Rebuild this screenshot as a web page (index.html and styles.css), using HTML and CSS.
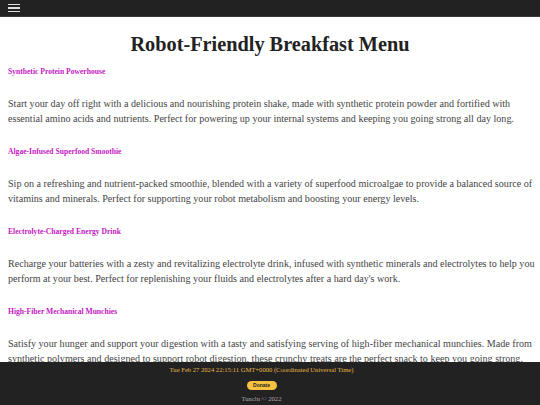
FILE: index.html
```html
<!DOCTYPE html>
<html>
<head>
<meta charset="utf-8">
<link rel="stylesheet" href="styles.css">
</head>
<body>
<header class="topbar">
  <button class="menu-btn" aria-label="menu"><span></span><span></span><span></span></button>
</header>
<main class="content">
  <h1 class="title">Robot-Friendly Breakfast Menu</h1>
  <section class="item">
    <h2 class="item-name">Synthetic Protein Powerhouse</h2>
    <p class="item-desc">Start your day off right with a delicious and nourishing protein shake, made with synthetic protein powder and fortified with essential amino acids and nutrients. Perfect for powering up your internal systems and keeping you going strong all day long.</p>
  </section>
  <section class="item">
    <h2 class="item-name">Algae-Infused Superfood Smoothie</h2>
    <p class="item-desc">Sip on a refreshing and nutrient-packed smoothie, blended with a variety of superfood microalgae to provide a balanced source of vitamins and minerals. Perfect for supporting your robot metabolism and boosting your energy levels.</p>
  </section>
  <section class="item">
    <h2 class="item-name">Electrolyte-Charged Energy Drink</h2>
    <p class="item-desc">Recharge your batteries with a zesty and revitalizing electrolyte drink, infused with synthetic minerals and electrolytes to help you perform at your best. Perfect for replenishing your fluids and electrolytes after a hard day's work.</p>
  </section>
  <section class="item">
    <h2 class="item-name">High-Fiber Mechanical Munchies</h2>
    <p class="item-desc">Satisfy your hunger and support your digestion with a tasty and satisfying serving of high-fiber mechanical munchies. Made from synthetic polymers and designed to support robot digestion, these crunchy treats are the perfect snack to keep you going strong.</p>
  </section>
</main>
<footer class="footer">
  <div class="date">Tue Feb 27 2024 22:15:11 GMT+0000 (Coordinated Universal Time)</div>
  <button class="donate">Donate</button>
  <div class="copy">Tuncln © 2022</div>
</footer>
</body>
</html>
```
FILE: styles.css
```css
html, body {
  margin: 0;
  padding: 0;
}
body {
  font-family: "Liberation Serif", "Times New Roman", serif;
  background: #fff;
  color: #444;
  height: 405px;
  overflow: hidden;
}
.topbar {
  height: 16px;
  background: #222;
  display: flex;
  align-items: center;
  padding-left: 8px;
  border-bottom: 1px solid #3a3a3a;
}
.menu-btn {
  background: none;
  border: 0;
  padding: 0;
  width: 12px;
  display: flex;
  flex-direction: column;
  gap: 2px;
}
.menu-btn span {
  display: block;
  height: 1.5px;
  background: #ddd;
}
.content {
  padding: 0 0 0 8px;
}
.title {
  margin: 14px 8px 0 0;
  text-align: center;
  font-size: 20.3px;
  line-height: 26px;
  color: #222;
  font-weight: bold;
}
.item-name {
  margin: 10px 0 0;
  font-size: 7.6px;
  line-height: 10px;
  color: #c318c3;
  font-weight: bold;
}
.item-desc {
  margin: 18.5px 0 0;
  font-size: 10.1px;
  line-height: 15px;
  color: #444;
}
.item + .item .item-name {
  margin-top: 21.5px;
}
.footer {
  position: fixed;
  left: 0;
  right: 0;
  bottom: 0;
  height: 43px;
  padding-right: 17px;
  background: #222;
  display: flex;
  flex-direction: column;
  align-items: center;
}
.date {
  margin-top: 3px;
  font-size: 6.6px;
  line-height: 9px;
  color: #e6b548;
}
.donate {
  margin-top: 7px;
  height: 9px;
  width: 30px;
  padding: 0;
  border: 0;
  border-radius: 5px;
  background: #f7c240;
  color: #222;
  font-family: "Liberation Sans", Arial, sans-serif;
  font-weight: bold;
  font-size: 5px;
  line-height: 9px;
}
.copy {
  margin-top: 4px;
  font-size: 6.6px;
  line-height: 9px;
  color: #aaa;
}
```
